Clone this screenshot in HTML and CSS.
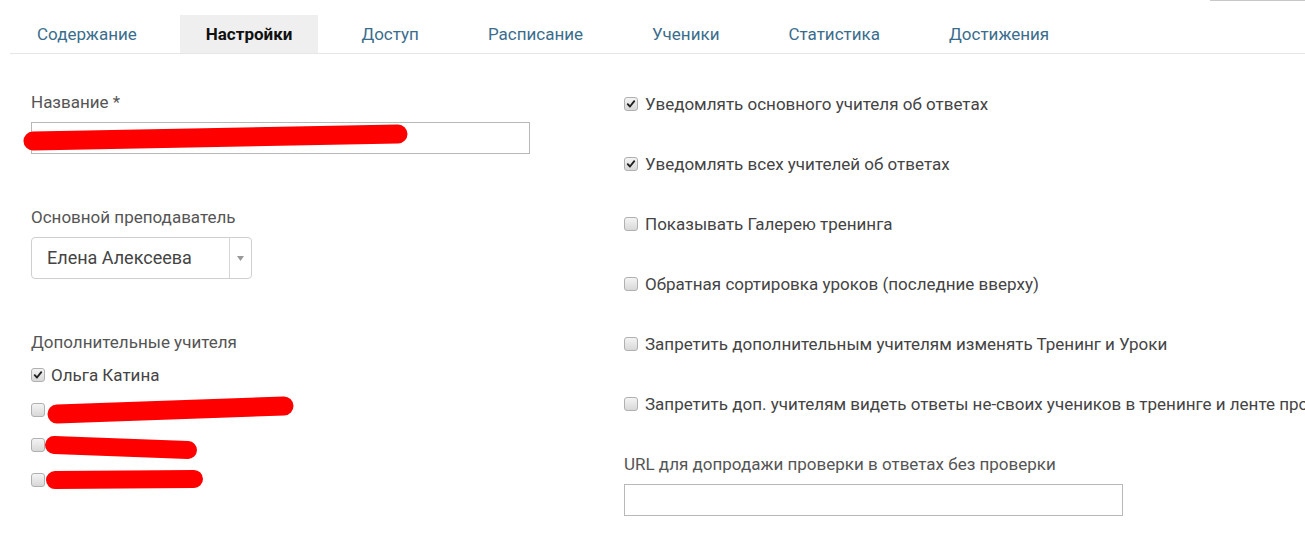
FILE: index.html
```html
<!DOCTYPE html>
<html lang="ru">
<head>
<meta charset="utf-8">
<title>Настройки</title>
<link rel="stylesheet" href="styles.css">
</head>
<body>
<div class="page">
  <div class="topbar"><span class="topline"></span></div>
  <nav class="tabs">
    <a class="tab">Содержание</a>
    <a class="tab active">Настройки</a>
    <a class="tab">Доступ</a>
    <a class="tab">Расписание</a>
    <a class="tab">Ученики</a>
    <a class="tab">Статистика</a>
    <a class="tab">Достижения</a>
  </nav>
  <div class="form">
    <div class="col-left">
      <div class="label">Название *</div>
      <div class="input"></div>

      <div class="label gap">Основной преподаватель</div>
      <div class="select">
        <span class="select-value">Елена Алексеева</span>
        <span class="select-arrow"><svg width="7" height="5" viewBox="0 0 7 5"><path d="M0 0h7L3.5 5z" fill="#999"/></svg></span>
      </div>

      <div class="label gap tight">Дополнительные учителя</div>
      <div class="checklist">
        <div class="check-row"><span class="cb checked"><svg viewBox="0 0 14 14"><path d="M3.2 7.2l2.6 2.7 5-6.2" fill="none" stroke="#222" stroke-width="2.2" stroke-linecap="round" stroke-linejoin="round"/></svg></span><span class="cb-text">Ольга Катина</span></div>
        <div class="check-row"><span class="cb"></span><span class="cb-text"></span></div>
        <div class="check-row"><span class="cb"></span><span class="cb-text"></span></div>
        <div class="check-row"><span class="cb"></span><span class="cb-text"></span></div>
      </div>
    </div>

    <div class="col-right">
      <div class="opt"><span class="cb checked"><svg viewBox="0 0 14 14"><path d="M3.2 7.2l2.6 2.7 5-6.2" fill="none" stroke="#222" stroke-width="2.2" stroke-linecap="round" stroke-linejoin="round"/></svg></span><span class="opt-text">Уведомлять основного учителя об ответах</span></div>
      <div class="opt"><span class="cb checked"><svg viewBox="0 0 14 14"><path d="M3.2 7.2l2.6 2.7 5-6.2" fill="none" stroke="#222" stroke-width="2.2" stroke-linecap="round" stroke-linejoin="round"/></svg></span><span class="opt-text">Уведомлять всех учителей об ответах</span></div>
      <div class="opt"><span class="cb"></span><span class="opt-text">Показывать Галерею тренинга</span></div>
      <div class="opt"><span class="cb"></span><span class="opt-text">Обратная сортировка уроков (последние вверху)</span></div>
      <div class="opt"><span class="cb"></span><span class="opt-text">Запретить дополнительным учителям изменять Тренинг и Уроки</span></div>
      <div class="opt"><span class="cb"></span><span class="opt-text">Запретить доп. учителям видеть ответы не-своих учеников в тренинге и ленте проверки</span></div>
      <div class="label url-label">URL для допродажи проверки в ответах без проверки</div>
      <div class="input"></div>
    </div>
  </div>

  <svg class="redact" width="1305" height="550" viewBox="0 0 1305 550">
    <g stroke="#ff0000" stroke-linecap="round" fill="none">
      <line x1="33" y1="141" x2="398" y2="134" stroke-width="19"/>
      <line x1="57" y1="414" x2="284" y2="406" stroke-width="19"/>
      <line x1="54" y1="445" x2="188" y2="450" stroke-width="18"/>
      <line x1="55" y1="480" x2="194" y2="479" stroke-width="18"/>
    </g>
  </svg>
</div>
</body>
</html>
```

FILE: styles.css
```css
html, body {
  margin: 0;
  padding: 0;
  background: #fff;
  overflow: hidden;
}

.page {
  position: relative;
  width: 1305px;
  height: 550px;
  overflow: hidden;
  font-family: Roboto, "Liberation Sans", Arial, sans-serif;
  color: #444;
}

.topbar {
  display: flex;
  justify-content: flex-end;
  height: 1px;
}

.topline {
  width: 95px;
  height: 1px;
  background: #c8c8c8;
}

.tabs {
  display: flex;
  gap: 17px;
  margin: 14px 0 0 10px;
  padding-left: 1px;
  border-bottom: 1px solid #e6e6e6;
}

.tab {
  display: block;
  height: 38px;
  line-height: 38px;
  padding: 0 26px;
  font-size: 17px;
  color: #3a6d8c;
  white-space: nowrap;
}

.tab.active {
  background: #efefef;
  color: #111;
  font-weight: 700;
}

.form {
  display: grid;
  grid-template-columns: 593px 1fr;
  padding-left: 31px;
}

.col-left {
  padding-top: 38px;
}

.col-right {
  padding-top: 40px;
  min-width: 0;
  overflow: hidden;
}

.label {
  font-size: 17px;
  line-height: 20px;
  color: #555;
  white-space: nowrap;
  margin-bottom: 10px;
}

.label.gap {
  margin-top: 53px;
}

.label.tight {
  margin-bottom: 5px;
}

.input {
  width: 499px;
  height: 32px;
  box-sizing: border-box;
  border: 1px solid #b8b8b8;
  background: #fff;
}

.select {
  display: flex;
  width: 221px;
  height: 42px;
  box-sizing: border-box;
  border: 1px solid #cfcfcf;
  border-radius: 4px;
  background: #fff;
}

.select-value {
  flex: 1;
  padding-left: 15px;
  line-height: 40px;
  font-size: 18px;
  color: #444;
  white-space: nowrap;
}

.select-arrow {
  width: 21px;
  border-left: 1px solid #d6d6d6;
  display: flex;
  align-items: center;
  justify-content: center;
}

.check-row {
  display: flex;
  align-items: center;
  height: 35px;
}

.cb {
  flex: none;
  display: block;
  width: 14px;
  height: 14px;
  box-sizing: border-box;
  border: 1px solid #b0b0b0;
  border-radius: 3px;
  background: linear-gradient(#f4f4f4, #d8d8d8);
}

.cb svg {
  display: block;
  width: 12px;
  height: 12px;
}

.cb-text {
  margin-left: 6px;
  font-size: 17px;
  color: #444;
  white-space: nowrap;
}

.opt {
  display: flex;
  align-items: center;
  height: 20px;
  margin-bottom: 40px;
  white-space: nowrap;
}

.opt-text {
  margin-left: 7px;
  font-size: 17px;
  color: #444;
}

.url-label {
  font-size: 17px;
}

.redact {
  position: absolute;
  left: 0;
  top: 0;
  pointer-events: none;
}
```
